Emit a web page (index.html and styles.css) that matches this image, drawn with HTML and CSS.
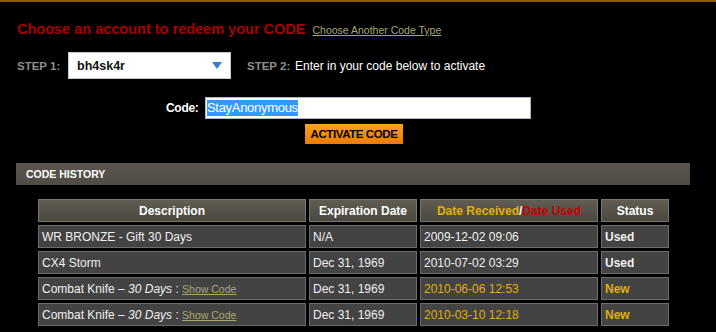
FILE: index.html
```html
<!DOCTYPE html>
<html>
<head>
<meta charset="utf-8">
<link rel="stylesheet" href="styles.css">
</head>
<body>
<div class="topbar"></div>
<div class="page">
  <div class="title-row">
    <h1 class="title">Choose an account to redeem your CODE</h1>
    <a class="alt-link" href="#">Choose Another Code Type</a>
  </div>
  <div class="step-row">
    <span class="step-label">STEP 1:</span>
    <div class="select">
      <span class="select-value">bh4sk4r</span>
      <svg class="select-arrow" width="10" height="7" viewBox="0 0 10 7"><polygon points="0,0 10,0 5,7" fill="#3b7fc4"/></svg>
    </div>
    <span class="step-label step2">STEP 2:</span>
    <span class="step-text">Enter in your code below to activate</span>
  </div>
  <div class="code-row">
    <label class="code-label">Code:</label>
    <div class="code-input"><span class="selected">StayAnonymous</span></div>
  </div>
  <div class="btn-row">
    <button class="activate">ACTIVATE CODE</button>
  </div>
</div>
<div class="history-bar">CODE HISTORY</div>
<table class="history">
  <thead>
    <tr>
      <th class="c-desc">Description</th>
      <th class="c-exp">Expiration Date</th>
      <th class="c-date"><span class="yellow">Date Received</span>/<span class="red">Date Used</span></th>
      <th class="c-status">Status</th>
    </tr>
  </thead>
  <tbody>
    <tr>
      <td>WR BRONZE - Gift 30 Days</td>
      <td>N/A</td>
      <td>2009-12-02 09:06</td>
      <td class="status">Used</td>
    </tr>
    <tr>
      <td>CX4 Storm</td>
      <td>Dec 31, 1969</td>
      <td>2010-07-02 03:29</td>
      <td class="status">Used</td>
    </tr>
    <tr>
      <td>Combat Knife &ndash; <em>30 Days</em> : <a class="show" href="#">Show Code</a></td>
      <td>Dec 31, 1969</td>
      <td class="yellow">2010-06-06 12:53</td>
      <td class="status yellow">New</td>
    </tr>
    <tr>
      <td>Combat Knife &ndash; <em>30 Days</em> : <a class="show" href="#">Show Code</a></td>
      <td>Dec 31, 1969</td>
      <td class="yellow">2010-03-10 12:18</td>
      <td class="status yellow">New</td>
    </tr>
  </tbody>
</table>
</body>
</html>
```
FILE: styles.css
```css
html, body {
  margin: 0;
  padding: 0;
  background: #000;
  font-family: "Liberation Sans", Arial, sans-serif;
  color: #fff;
}
.topbar {
  height: 2px;
  background: #8e5c14;
}
.page {
  padding-left: 17px;
}
.title-row {
  display: flex;
  align-items: baseline;
  gap: 7px;
  padding-top: 19px;
  height: 24px;
}
.title {
  margin: 0;
  font-size: 14.5px;
  font-weight: bold;
  color: #a80000;
}
.alt-link {
  font-size: 10.5px;
  color: #a8a86a;
  text-decoration: underline;
}
.step-row {
  display: flex;
  align-items: center;
  margin-top: 7px;
  height: 27px;
}
.step-label {
  font-size: 11.5px;
  font-weight: bold;
  color: #8e8e8e;
  width: 42px;
  white-space: nowrap;
}
.select {
  margin-left: 9px;
  background: #fff;
  border: 1px solid #c8c8c8;
  display: flex;
  align-items: center;
  justify-content: space-between;
  padding: 0 8px 0 8px;
  box-sizing: border-box;
  width: 163px;
  height: 27px;
}
.select-value {
  font-size: 12.5px;
  font-weight: bold;
  color: #111;
}
.select-arrow {
  display: block;
}
.step2 {
  margin-left: 16px;
}
.step-text {
  margin-left: 6px;
  font-size: 12px;
  color: #fff;
}
.code-row {
  display: flex;
  align-items: center;
  margin-top: 18px;
  padding-left: 149px;
  height: 22px;
}
.code-label {
  font-size: 12px;
  font-weight: bold;
  color: #fff;
  width: 34px;
  letter-spacing: -0.3px;
}
.code-input {
  margin-left: 5px;
  width: 326px;
  height: 22px;
  box-sizing: border-box;
  background: #fff;
  border: 1px solid #a9b8c8;
  padding: 2px 1px;
  display: flex;
  align-items: center;
}
.selected {
  background: #3399ff;
  color: #fff;
  font-size: 13px;
  line-height: 16px;
  letter-spacing: -0.3px;
}
.btn-row {
  display: flex;
  padding-left: 288px;
  margin-top: 5px;
}
.activate {
  margin: 0;
  width: 98px;
  height: 20px;
  border: 0;
  padding: 0;
  background: linear-gradient(#ffa020, #ea7c00);
  color: #000;
  font-family: "Liberation Sans", Arial, sans-serif;
  font-size: 11.5px;
  font-weight: bold;
  letter-spacing: -0.4px;
}
.history-bar {
  margin: 19px 0 0 16px;
  width: 674px;
  height: 22px;
  box-sizing: border-box;
  background: linear-gradient(#5a564e, #4f4c45);
  color: #fff;
  font-size: 10.5px;
  font-weight: bold;
  line-height: 22px;
  padding-left: 10px;
}
.history {
  margin: 11px 0 0 35px;
  border-collapse: separate;
  border-spacing: 3px;
  font-size: 12px;
}
.history th, .history td {
  height: 23px;
  box-sizing: border-box;
  border: 1px solid #6c6c6c;
  padding: 0 3px;
  white-space: nowrap;
}
.history th {
  background: linear-gradient(#615d53, #4a4740);
  border-color: #787670;
  color: #fff;
  font-weight: bold;
  text-align: center;
}
.history td {
  background: #434343;
  color: #f0f0f0;
}
.c-desc { width: 268px; }
.c-exp { width: 108px; }
.c-date { width: 178px; }
.c-status { width: 68px; }
.status {
  font-weight: bold;
}
.yellow { color: #e0b000; }
.history td.yellow { color: #e0b000; }
.red { color: #c80000; }
.show {
  font-size: 10.5px;
  color: #a8a86a;
  text-decoration: underline;
}
em { font-style: italic; }
```
